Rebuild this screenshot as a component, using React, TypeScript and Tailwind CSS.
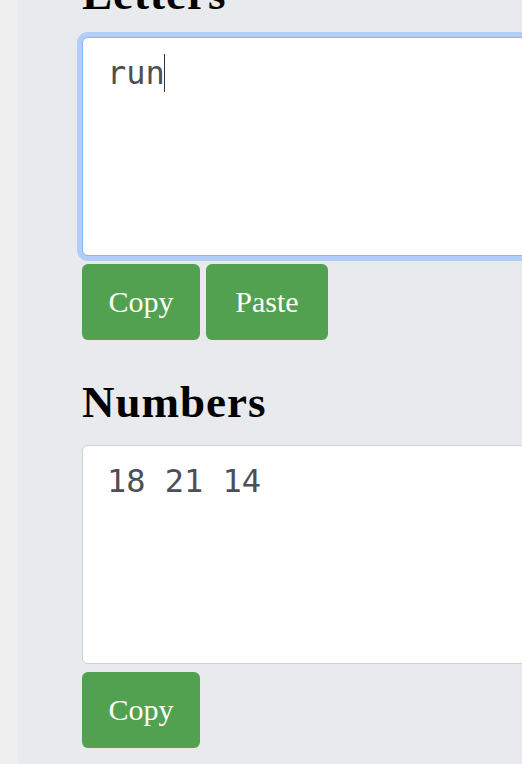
import { useEffect, useRef } from 'react';

const serif = { fontFamily: '"Liberation Serif", "DejaVu Serif", serif' };

function Btn({ label, w }: { label: string; w: string }) {
  return (
    <button
      type="button"
      className={`${w} h-[76px] rounded-[6px] bg-[#52a150] text-[30px] leading-none text-white`}
      style={serif}
    >
      {label}
    </button>
  );
}

function Box({ value, focused }: { value: string; focused?: boolean }) {
  const ref = useRef<HTMLTextAreaElement>(null);

  useEffect(() => {
    if (!focused || !ref.current) return;
    const el = ref.current;
    el.focus();
    el.setSelectionRange(value.length, value.length);
  }, [focused, value]);

  return (
    <div className="relative">
      <textarea
        ref={ref}
        defaultValue={value}
        spellCheck={false}
        className={
          'block h-[219px] w-[520px] resize-none rounded-[6px] border bg-white px-[24px] pt-[11px] text-[32px] leading-[1.5] text-[#4b4f56] caret-transparent outline-none ' +
          (focused
            ? 'border-[#86b7fe] shadow-[0_0_0_5px_#b2cdf6]'
            : 'border-[#cdd0d4]')
        }
        style={{ fontFamily: '"DejaVu Sans Mono", "Liberation Mono", monospace' }}
      />
      {/* static caret, so the shot never catches it mid-blink */}
      {focused && (
        <span className="pointer-events-none absolute left-[82px] top-[17px] h-[38px] w-px bg-[#333]" />
      )}
    </div>
  );
}

export default function App() {
  return (
    <div className="flex h-[764px] w-[522px] overflow-hidden bg-[#e9eaee]">
      <div className="w-[18px] shrink-0 bg-[#efefef]" />
      <div className="flex-1 pl-[64px]">
        <section className="mt-[-33px]">
          <h2 className="mb-4 text-[45px] font-bold leading-[1.2] tracking-[1px] text-black" style={serif}>
            Letters
          </h2>
          <Box value="run" focused />
          <div className="mt-2 flex gap-[6px]">
            <Btn label="Copy" w="w-[118px]" />
            <Btn label="Paste" w="w-[122px]" />
          </div>
        </section>

        <section className="mt-[35px]">
          <h2 className="mb-4 text-[45px] font-bold leading-[1.2] tracking-[1px] text-black" style={serif}>
            Numbers
          </h2>
          <Box value="18 21 14" />
          <div className="mt-2 flex gap-[6px]">
            <Btn label="Copy" w="w-[118px]" />
          </div>
        </section>
      </div>
    </div>
  );
}
